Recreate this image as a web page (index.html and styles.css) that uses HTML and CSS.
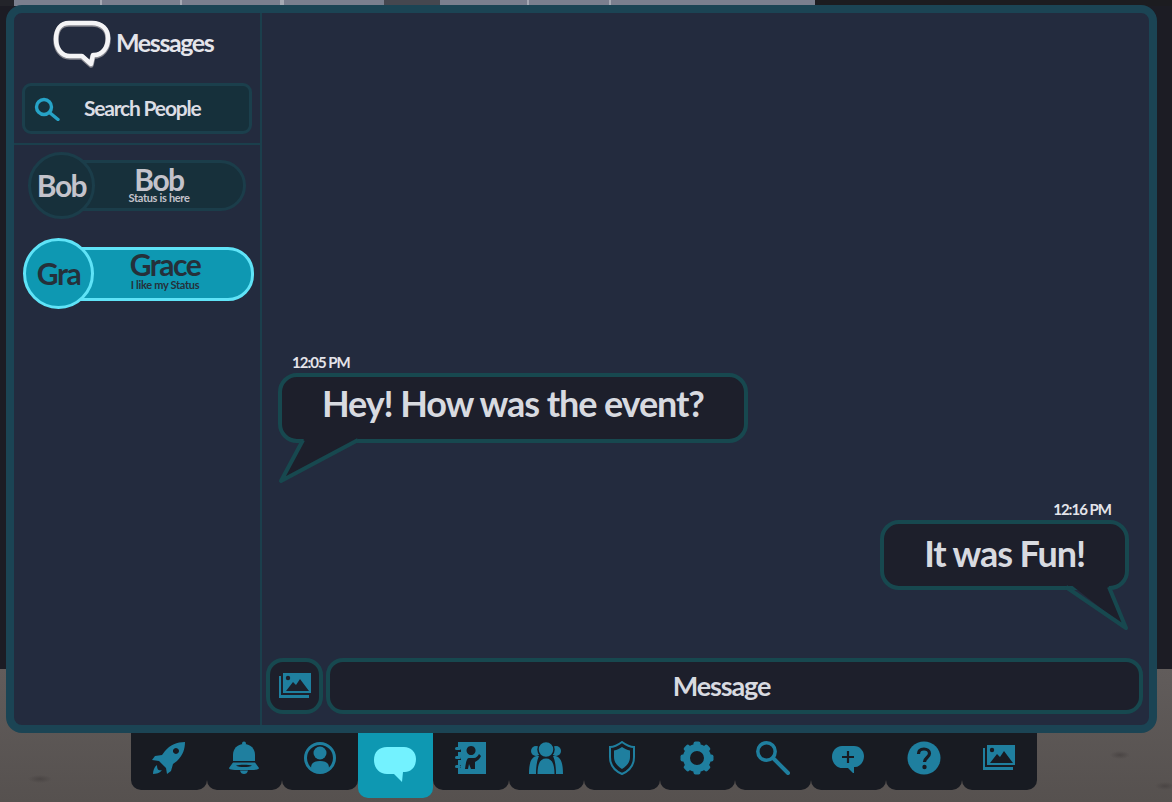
FILE: index.html
```html
<!DOCTYPE html>
<html lang="en">
<head>
    <meta charset="UTF-8">
    <meta name="viewport" content="width=device-width, initial-scale=1.0">
    <title>Messages</title>
    <link rel="stylesheet" href="styles.css">
</head>
<body>
    <div class="panel">
        <aside class="sidebar">
            <div class="brand">
                <svg class="brand-icon" viewBox="0 0 58 48" width="58" height="48">
                    <path d="M16 3 H39 C49 3 55 9 55 18 C55 28 49 35 41 35 H40 L38 44 L29 36 H17 C8 36 3 28 3 19 C3 9 8 3 16 3 Z" fill="none" stroke="#85868e" stroke-width="5.500" stroke-linejoin="round" transform="translate(0 1)"/>
                    <path d="M16 3 H39 C49 3 55 9 55 18 C55 28 49 35 41 35 H40 L38 44 L29 36 H17 C8 36 3 28 3 19 C3 9 8 3 16 3 Z" fill="none" stroke="#f4f4f6" stroke-width="4.500" stroke-linejoin="round"/>
                </svg>
                <span class="brand-title">Messages</span>
            </div>
            <div class="search-box">
                <svg class="search-icon" viewBox="0 0 26 24" width="26" height="24">
                    <circle cx="10" cy="10" r="7.500" fill="none" stroke="#26a3c7" stroke-width="3.400"/>
                    <path d="M15.500 15.500 L24 22.500" stroke="#26a3c7" stroke-width="3.400" stroke-linecap="round"/>
                </svg>
                <span class="search-text">Search People</span>
            </div>
            <div class="contacts">
                <div class="contact">
                    <div class="contact-avatar">Bob</div>
                    <div class="contact-pill">
                        <div class="contact-name">Bob</div>
                        <div class="contact-status">Status is here</div>
                    </div>
                </div>
                <div class="contact active">
                    <div class="contact-avatar">Gra</div>
                    <div class="contact-pill">
                        <div class="contact-name">Grace</div>
                        <div class="contact-status">I like my Status</div>
                    </div>
                </div>
            </div>
        </aside>
        <main class="chat">
            <div class="thread">
                <div class="message incoming">
                    <div class="message-time">12:05 PM</div>
                    <div class="bubble">
                        Hey! How was the event?
                        <svg class="tail" viewBox="0 0 84 48" width="84" height="48">
                            <path d="M27 -3 L3 41 L80 0 L75 -3 Z" fill="#1d1f2b"/>
                            <path d="M25 0 L3 41 L80 0" fill="none" stroke="#17484f" stroke-width="4" stroke-linejoin="round"/>
                        </svg>
                    </div>
                </div>
                <div class="message outgoing">
                    <div class="message-time">12:16 PM</div>
                    <div class="bubble">
                        It was Fun!
                        <svg class="tail" viewBox="0 0 66 48" width="66" height="48">
                            <path d="M6 -3 L62 41 L45 0 L44 -3 Z" fill="#1d1f2b"/>
                            <path d="M2 0 L62 41 L45 0" fill="none" stroke="#17484f" stroke-width="4" stroke-linejoin="round"/>
                        </svg>
                    </div>
                </div>
            </div>
            <div class="composer">
                <div class="attach-button">
                    <svg class="attach-icon" viewBox="0 0 32 26" width="32" height="26">
                        <path d="M0 3 H2 V22 H30 V25 H0 Z"/>
                        <path d="M4 0 H32 V20 H4 Z"/>
                        <circle cx="9" cy="5" r="2.200" fill="#1d1f2b"/>
                        <path d="M7 18 L14 9 L17 12 L21 6 L30 18 Z" fill="#1d1f2b"/>
                    </svg>
                </div>
                <div class="message-input">Message</div>
            </div>
        </main>
    </div>

    <nav class="tabs">
        <div class="tab">
            <svg viewBox="0 0 34 34" width="34" height="34">
                <path d="M33 1 C25 1 18 4 13 10 L10 14 L3 15 L0 19 L7 20 L14 27 L15 33 L19 30 L21 23 L25 20 C31 14 33 8 33 1 Z M24 7 A3 3 0 1 1 23.900 7 Z M5 24 C2 26 1 30 1 33 C4 33 8 32 10 29 C7 30 5 29 5 24 Z" fill-rule="evenodd"/>
            </svg>
        </div>
        <div class="tab">
            <svg viewBox="0 0 32 34" width="32" height="34">
                <circle cx="16" cy="2.500" r="2"/>
                <path d="M16 3 C9 3 5 8 5 14 V20 H27 V14 C27 8 23 3 16 3 Z"/>
                <path d="M5 21.500 H27 L31 27 C31 29 26 29 16 29 C6 29 1 29 1 27 Z M8 24.500 C11 26.500 21 26.500 24 24.500 C21 23.500 11 23.500 8 24.500 Z" fill-rule="evenodd"/>
                <path d="M12 29.500 H20 C19.500 32 18 33 16 33 C14 33 12.500 32 12 29.500 Z"/>
            </svg>
        </div>
        <div class="tab">
            <svg viewBox="0 0 34 34" width="34" height="34">
                <circle cx="17" cy="17" r="14.500" fill="none" stroke="currentColor" stroke-width="3"/>
                <circle cx="17" cy="12" r="6.500"/>
                <path d="M8 27 C8 22 11 20 17 20 C23 20 26 22 26 27 C23 30 20 31 17 31 C14 31 11 30 8 27 Z"/>
            </svg>
        </div>
        <div class="tab active">
            <svg viewBox="0 0 44 38" width="44" height="38">
                <path d="M14 1 H31 C38 1 43 6 43 13 C43 21 38 26 32 26 H30 L29 36 L21 28 H14 C6 28 1 22 1 14 C1 6 6 1 14 1 Z"/>
            </svg>
        </div>
        <div class="tab">
            <svg viewBox="0 0 32 34" width="32" height="34">
                <path d="M3 1 H31 V33 H3 V27 H6 V24 H3 V19 H6 V16 H3 V11 H6 V8 H3 Z M16 5 A4.500 4.500 0 1 0 16.100 5 Z M10 28 H13 L14 23 L16 28 H20 V21 C22 20 25 18 26 15 L24 13 C23 15 21 17 19 17 H14 C12 17 11 20 10 28 Z" fill-rule="evenodd"/>
                <rect x="0" y="6" width="6" height="3" rx="1.500"/>
                <rect x="0" y="15" width="6" height="3" rx="1.500"/>
                <rect x="0" y="24" width="6" height="3" rx="1.500"/>
            </svg>
        </div>
        <div class="tab">
            <svg viewBox="0 0 34 34" width="34" height="34">
                <circle cx="7" cy="10" r="5"/>
                <circle cx="27" cy="10" r="5"/>
                <path d="M0 33 C0 22 2 16 8 15 L10 15 C8 19 7 26 7 33 Z M34 33 C34 22 32 16 26 15 L24 15 C26 19 27 26 27 33 Z"/>
                <circle cx="17" cy="8.500" r="8" stroke="#181b22" stroke-width="1.500"/>
                <path d="M8.500 33 C8.500 23 11 17.500 17 17.500 C23 17.500 25.500 23 25.500 33 Z"/>
            </svg>
        </div>
        <div class="tab">
            <svg viewBox="0 0 26 34" width="26" height="34">
                <path d="M13 1 C17 4 21 6 25 6 V16 C25 24 20 30 13 33 C6 30 1 24 1 16 V6 C5 6 9 4 13 1 Z" fill="none" stroke="currentColor" stroke-width="2"/>
                <path d="M13 6 C16 8 18 9 21 9.500 V16 C21 21 18 25 13 28 C8 25 5 21 5 16 V9.500 C8 9 10 8 13 6 Z"/>
            </svg>
        </div>
        <div class="tab">
            <svg viewBox="0 0 34 34" width="34" height="34">
                <circle cx="17" cy="17" r="10.500" fill="none" stroke="currentColor" stroke-width="7"/>
                <rect x="13.500" y="0.500" width="7" height="6" rx="2"/>
                <rect x="13.500" y="27.500" width="7" height="6" rx="2"/>
                <rect x="0.500" y="13.500" width="6" height="7" rx="2"/>
                <rect x="27.500" y="13.500" width="6" height="7" rx="2"/>
                <rect x="13.500" y="0.500" width="7" height="6" rx="2" transform="rotate(45 17 17)"/>
                <rect x="13.500" y="27.500" width="7" height="6" rx="2" transform="rotate(45 17 17)"/>
                <rect x="0.500" y="13.500" width="6" height="7" rx="2" transform="rotate(45 17 17)"/>
                <rect x="27.500" y="13.500" width="6" height="7" rx="2" transform="rotate(45 17 17)"/>
            </svg>
        </div>
        <div class="tab">
            <svg viewBox="0 0 34 34" width="34" height="34">
                <circle cx="10.500" cy="10.500" r="8.700" fill="none" stroke="currentColor" stroke-width="3.500"/>
                <path d="M17 17 L32 32" stroke="currentColor" stroke-width="4" stroke-linecap="round"/>
            </svg>
        </div>
        <div class="tab">
            <svg viewBox="0 -2 34 30" width="34" height="30">
                <path d="M11 1 H23 C29 1 33 6 33 11 C33 17 29 22 24 22 H23 L23 29 L17 23 H11 C5 23 1 17 1 12 C1 6 5 1 11 1 Z"/>
                <path d="M17 6 V18 M11 12 H23" stroke="#181b22" stroke-width="2.200"/>
            </svg>
        </div>
        <div class="tab">
            <svg viewBox="0 0 34 34" width="34" height="34">
                <circle cx="17" cy="17" r="16.500"/>
                <path d="M11.500 13 C11.500 9.500 14 8 17 8 C20 8 22.500 10 22.500 12.500 C22.500 16.500 17.500 16.500 17.500 21" fill="none" stroke="#181b22" stroke-width="3.200"/>
                <circle cx="17.500" cy="26" r="2.200" fill="#181b22"/>
            </svg>
        </div>
        <div class="tab">
            <svg viewBox="0 0 32 26" width="32" height="26">
                <path d="M0 3 H2 V22 H30 V25 H0 Z"/>
                <path d="M4 0 H32 V20 H4 Z"/>
                <circle cx="9" cy="5" r="2.200" fill="#181b22"/>
                <path d="M7 18 L14 9 L17 12 L21 6 L30 18 Z" fill="#181b22"/>
            </svg>
        </div>
    </nav>
</body>
</html>
```

FILE: styles.css
```css
* {
    box-sizing: border-box;
}
body {
    margin: 0;
    height: 802px;
    overflow: hidden;
    font-family: 'Lato', sans-serif;
    font-weight: 700;
    color: #d8dae0;
    background:
        linear-gradient(to right, #23242a 0, #23242a 14px, #7a7f8e 14px, #7a7f8e 100px, #a5a9b3 100px, #a5a9b3 102px, #7a7f8e 102px, #7a7f8e 180px, #a5a9b3 180px, #a5a9b3 182px, #7a7f8e 182px, #7a7f8e 280px, #a5a9b3 280px, #a5a9b3 284px, #7a7f8e 284px, #7a7f8e 384px, #45474f 384px, #45474f 440px, #7a7f8e 440px, #7a7f8e 527px, #a5a9b3 527px, #a5a9b3 529px, #7a7f8e 529px, #7a7f8e 609px, #a5a9b3 609px, #a5a9b3 611px, #7a7f8e 611px, #7a7f8e 815px, #1c1c20 815px) top left / 100% 6px no-repeat,
        radial-gradient(ellipse 10px 4px at 1120px 755px, #4a4544, transparent),
        radial-gradient(ellipse 10px 4px at 1165px 786px, #4a4544, transparent),
        radial-gradient(ellipse 12px 4px at 40px 779px, #4a4544, transparent),
        linear-gradient(to bottom, #1c1c24 0, #1c1c24 669px, #615c5b 669px, #56514f 802px);
}
.panel {
    display: flex;
    width: 1151px;
    height: 728px;
    margin: 5px 0 0 6px;
    background-color: #232b3e;
    border: 8px solid #1b4454;
    border-radius: 16px;
}
.sidebar {
    width: 248px;
    flex-shrink: 0;
    border-right: 2px solid #1b3f4c;
}
.brand {
    display: flex;
    align-items: center;
    height: 57px;
    padding-left: 39px;
    gap: 5px;
}
.brand-icon {
    margin-top: 4px;
}
.brand-title {
    font-size: 25px;
    letter-spacing: -1.400px;
    color: #e4e4ea;
}
.search-box {
    display: flex;
    align-items: center;
    width: 230px;
    height: 51px;
    margin: 13px 0 0 8px;
    padding-left: 9px;
    background-color: #16303b;
    border: 3px solid #1b3f4c;
    border-radius: 9px;
}
.search-text {
    margin-left: 24px;
    padding-bottom: 3px;
    font-size: 21px;
    letter-spacing: -1.200px;
    color: #dcdde4;
}
.contacts {
    margin-top: 9px;
    padding-top: 7px;
    border-top: 2px solid #1b3f4c;
}
.contact {
    display: flex;
    align-items: center;
    height: 67px;
    margin-left: 14px;
}
.contact-avatar {
    position: relative;
    z-index: 1;
    display: flex;
    align-items: center;
    justify-content: center;
    flex-shrink: 0;
    width: 67px;
    height: 67px;
    padding-bottom: 2px;
    font-size: 30px;
    letter-spacing: -1.500px;
    color: #c4c3cb;
    background-color: #17303b;
    border: 3px solid #1b3d4a;
    border-radius: 50%;
}
.contact-pill {
    width: 191px;
    height: 51px;
    margin-left: -40px;
    padding: 3px 8px 0 25px;
    text-align: center;
    color: #c4c3cb;
    background-color: #17303b;
    border: 3px solid #1b3d4a;
    border-radius: 26px;
}
.contact-name {
    font-size: 30px;
    line-height: 26px;
    letter-spacing: -1.500px;
}
.contact-status {
    font-size: 11px;
    line-height: 11px;
    letter-spacing: -0.300px;
}
.contact.active {
    height: 71px;
    margin: 19px 0 0 9px;
}
.contact.active .contact-avatar {
    width: 71px;
    height: 71px;
    color: #25303a;
    background-color: #0e98b2;
    border-color: #5fe3f7;
}
.contact.active .contact-pill {
    width: 200px;
    height: 54px;
    padding: 1px 3px 0 25px;
    color: #25303a;
    background-color: #0e98b2;
    border-color: #5fe3f7;
}
.contact.active .contact-status {
    margin-top: 2px;
}
.chat {
    flex: 1;
    display: flex;
    flex-direction: column;
}
.thread {
    flex: 1;
    display: flex;
    flex-direction: column;
    justify-content: flex-end;
    gap: 57px;
    padding: 0 20px 68px 16px;
}
.message {
    display: flex;
    flex-direction: column;
    align-items: flex-start;
}
.message.outgoing {
    align-items: flex-end;
}
.message-time {
    height: 20px;
    padding: 0 18px 0 14px;
    font-size: 15px;
    line-height: 19px;
    letter-spacing: -1px;
    color: #e4e4ea;
}
.bubble {
    position: relative;
    height: 70px;
    padding: 1px 40px 0;
    font-size: 36px;
    line-height: 50px;
    letter-spacing: -1.100px;
    white-space: nowrap;
    color: #d8dae0;
    background-color: #1d1f2b;
    border: 4px solid #17484f;
    border-radius: 19px;
}
.outgoing .bubble {
    padding-top: 4px;
}
.tail {
    position: absolute;
    top: 63px;
    overflow: visible;
}
.incoming .tail {
    left: -4px;
}
.outgoing .tail {
    right: -5px;
}
.composer {
    display: flex;
    gap: 3px;
    height: 67px;
    padding: 0 6px 11px 4px;
}
.attach-button,
.message-input {
    display: flex;
    align-items: center;
    justify-content: center;
    background-color: #1d1f2b;
    border: 4px solid #17484f;
    border-radius: 17px;
}
.attach-button {
    width: 57px;
}
.attach-icon {
    fill: #1f7f9f;
}
.message-input {
    flex: 1;
    padding: 0 26px 2px 0;
    font-size: 27px;
    letter-spacing: -1.100px;
}
.tabs {
    display: grid;
    grid-template-columns: repeat(12, 75.5px);
    width: 906px;
    margin-left: 131px;
}
.tab {
    display: flex;
    justify-content: center;
    align-items: center;
    height: 57px;
    padding: 8px 0 15px;
    color: #1f7f9f;
    fill: currentColor;
    background-color: #181b22;
    border-radius: 0 0 10px 10px;
}
.tab.active {
    height: 65px;
    padding: 13px 0 14px;
    fill: #73f2ff;
    background-color: #0e98b2;
}
```
